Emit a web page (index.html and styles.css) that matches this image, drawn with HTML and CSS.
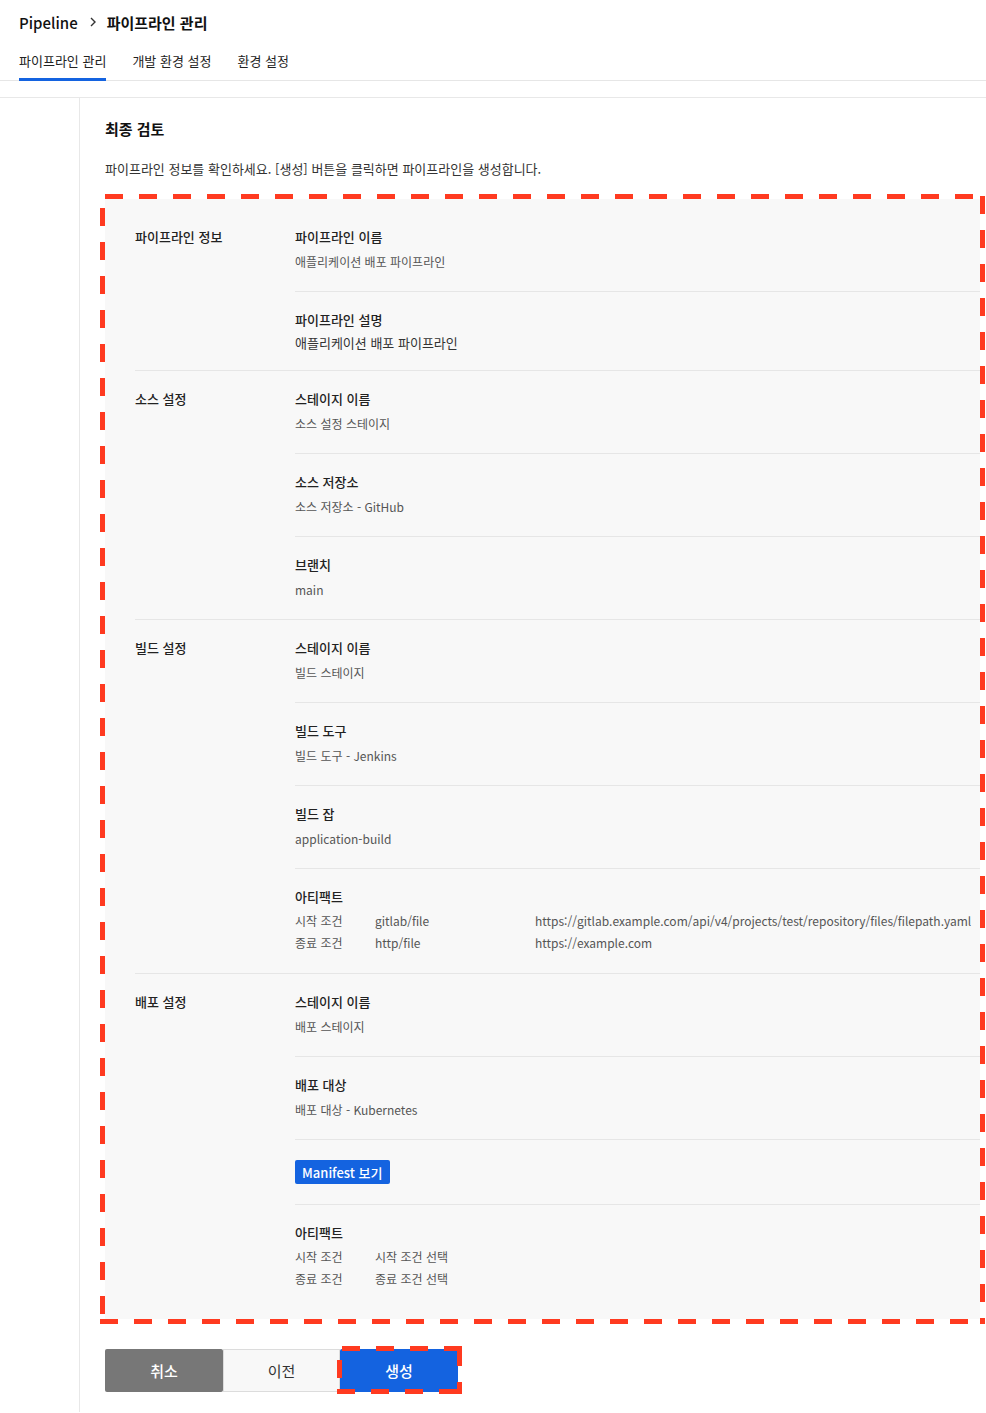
FILE: index.html
```html
<!DOCTYPE html>
<html lang="ko">
<head>
<meta charset="utf-8">
<title>Pipeline</title>
<link rel="stylesheet" href="styles.css">
</head>
<body>
<header class="header">
  <div class="crumbs">
    <span class="crumb-root">Pipeline</span>
    <svg class="chev" width="8" height="10" viewBox="0 0 8 10"><path d="M2 1l4 4-4 4" fill="none" stroke="#333" stroke-width="1.4"/></svg>
    <span class="crumb-cur">파이프라인 관리</span>
  </div>
  <nav class="tabs">
    <span class="tab active">파이프라인 관리</span>
    <span class="tab">개발 환경 설정</span>
    <span class="tab">환경 설정</span>
  </nav>
</header>
<div class="layout">
  <aside class="side"></aside>
  <main class="main">
    <h2 class="title">최종 검토</h2>
    <p class="desc">파이프라인 정보를 확인하세요. [생성] 버튼을 클릭하면 파이프라인을 생성합니다.</p>
    <div class="review annot">
      <section class="sec">
        <div class="sec-label">파이프라인 정보</div>
        <div class="items">
          <div class="item">
            <div class="it-title">파이프라인 이름</div>
            <div class="it-val">애플리케이션 배포 파이프라인</div>
          </div>
          <div class="item item-desc">
            <div class="it-title">파이프라인 설명</div>
            <div class="it-val big">애플리케이션 배포 파이프라인</div>
          </div>
        </div>
      </section>
      <section class="sec">
        <div class="sec-label">소스 설정</div>
        <div class="items">
          <div class="item">
            <div class="it-title">스테이지 이름</div>
            <div class="it-val">소스 설정 스테이지</div>
          </div>
          <div class="item">
            <div class="it-title">소스 저장소</div>
            <div class="it-val">소스 저장소 - GitHub</div>
          </div>
          <div class="item">
            <div class="it-title">브랜치</div>
            <div class="it-val">main</div>
          </div>
        </div>
      </section>
      <section class="sec">
        <div class="sec-label">빌드 설정</div>
        <div class="items">
          <div class="item">
            <div class="it-title">스테이지 이름</div>
            <div class="it-val">빌드 스테이지</div>
          </div>
          <div class="item">
            <div class="it-title">빌드 도구</div>
            <div class="it-val">빌드 도구 - Jenkins</div>
          </div>
          <div class="item">
            <div class="it-title">빌드 잡</div>
            <div class="it-val">application-build</div>
          </div>
          <div class="item item-art">
            <div class="it-title">아티팩트</div>
            <div class="art-row"><span class="c1">시작 조건</span><span class="c2">gitlab/file</span><span class="c3">https://gitlab.example.com/api/v4/projects/test/repository/files/filepath.yaml</span></div>
            <div class="art-row"><span class="c1">종료 조건</span><span class="c2">http/file</span><span class="c3">https://example.com</span></div>
          </div>
        </div>
      </section>
      <section class="sec">
        <div class="sec-label">배포 설정</div>
        <div class="items">
          <div class="item">
            <div class="it-title">스테이지 이름</div>
            <div class="it-val">배포 스테이지</div>
          </div>
          <div class="item">
            <div class="it-title">배포 대상</div>
            <div class="it-val">배포 대상 - Kubernetes</div>
          </div>
          <div class="item item-btn">
            <button class="manifest">Manifest 보기</button>
          </div>
          <div class="item item-art">
            <div class="it-title">아티팩트</div>
            <div class="art-row"><span class="c1">시작 조건</span><span class="c2">시작 조건 선택</span></div>
            <div class="art-row"><span class="c1">종료 조건</span><span class="c2">종료 조건 선택</span></div>
          </div>
        </div>
      </section>
    </div>
    <div class="actions">
      <button class="btn btn-cancel">취소</button>
      <button class="btn btn-prev">이전</button>
      <button class="btn btn-create annot annot-btn">생성</button>
    </div>
  </main>
</div>
</body>
</html>
```
FILE: styles.css
```css
* { box-sizing: border-box; }
html, body { margin: 0; padding: 0; background: #fff; }
body {
  font-family: "Noto Sans CJK KR", "Noto Sans", sans-serif;
  color: #222;
  width: 986px;
  min-height: 1413px;
  overflow: hidden;
}

.header {
  padding-left: 19px;
  border-bottom: 1px solid #e6e6e6;
}
.crumbs {
  display: flex;
  align-items: center;
  height: 44px;
}
.crumb-root { font-size: 15px; font-weight: 500; color: #111; }
.chev { margin: 0 10px 0 11px; }
.crumb-cur { font-size: 15px; font-weight: 700; color: #111; }

.tabs { display: flex; gap: 26px; }
.tab {
  font-size: 13px;
  line-height: 20px;
  padding: 7px 0 7px;
  border-bottom: 3px solid transparent;
  margin-bottom: -1px;
  color: #222;
}
.tab.active { border-bottom-color: #1463e0; }

.layout {
  display: flex;
  margin-top: 16px;
  border-top: 1px solid #e8e8e8;
  min-height: 1315px;
}
.side { width: 80px; flex: none; border-right: 1px solid #e8e8e8; }
.main { flex: 1; padding: 21px 6px 0 25px; min-width: 0; }

.title { margin: 0; font-size: 15px; line-height: 20px; font-weight: 700; color: #111; }
.desc { margin: 20px 0 0; font-size: 13px; line-height: 20px; color: #333; }

.annot { position: relative; }
.annot::after {
  content: "";
  position: absolute;
  top: -5px; left: -5px; right: -5px; bottom: -5px;
  pointer-events: none;
  background:
    linear-gradient(90deg, #ff3a20 0 18px, transparent 18px) 5px 0 / 34px 5px repeat-x,
    linear-gradient(90deg, #ff3a20 0 18px, transparent 18px) 0 100% / 34px 5px repeat-x,
    linear-gradient(180deg, #ff3a20 0 18px, transparent 18px) 0 14px / 5px 34px repeat-y,
    linear-gradient(180deg, #ff3a20 0 18px, transparent 18px) 100% 2px / 5px 34px repeat-y;
}

.review {
  margin-top: 20px;
  background: #f8f8f8;
  padding: 10px 0 10px 30px;
}
.sec { display: flex; border-top: 1px solid #e6e6e6; }
.sec:first-child { border-top: none; }
.sec-label {
  width: 160px;
  flex: none;
  padding-top: 18px;
  font-size: 13px;
  line-height: 20px;
  font-weight: 500;
  color: #222;
}
.items { flex: 1; min-width: 0; }
.item { border-top: 1px solid #e6e6e6; padding: 18px 0 19px; }
.item:first-child { border-top: none; }
.it-title { font-size: 13px; line-height: 20px; font-weight: 500; color: #222; }
.it-val { margin-top: 5px; font-size: 12px; line-height: 20px; color: #555; }
.it-val.big { font-size: 13px; color: #333; margin-top: 3px; }
.item-desc { padding-bottom: 17px; }

.item-art .it-title { margin-bottom: 3px; }
.art-row { display: flex; font-size: 12px; line-height: 22px; color: #555; white-space: nowrap; }
.art-row .c1 { width: 80px; flex: none; }
.art-row .c2 { width: 160px; flex: none; }

.item-btn { padding: 20px 0; }
.manifest {
  display: block;
  height: 24px;
  padding: 0 7px;
  border: none;
  border-radius: 2px;
  background: #1463e0;
  color: #fff;
  font-family: inherit;
  font-size: 13px;
  font-weight: 500;
}

.actions { display: flex; margin-top: 30px; }
.btn {
  width: 118px;
  height: 43px;
  font-family: inherit;
  font-size: 15px;
  border-radius: 2px;
  border: 1px solid transparent;
}
.btn-cancel { background: #777; color: #fff; font-weight: 500; }
.btn-prev { width: 117px; background: #f8f8f8; border-color: #dcdcdc; color: #333; border-radius: 0; }
.btn-create { background: #1463e0; color: #fff; font-weight: 500; }
.annot-btn::after { top: -4px; left: -4px; right: -5px; bottom: -3px; }
```
